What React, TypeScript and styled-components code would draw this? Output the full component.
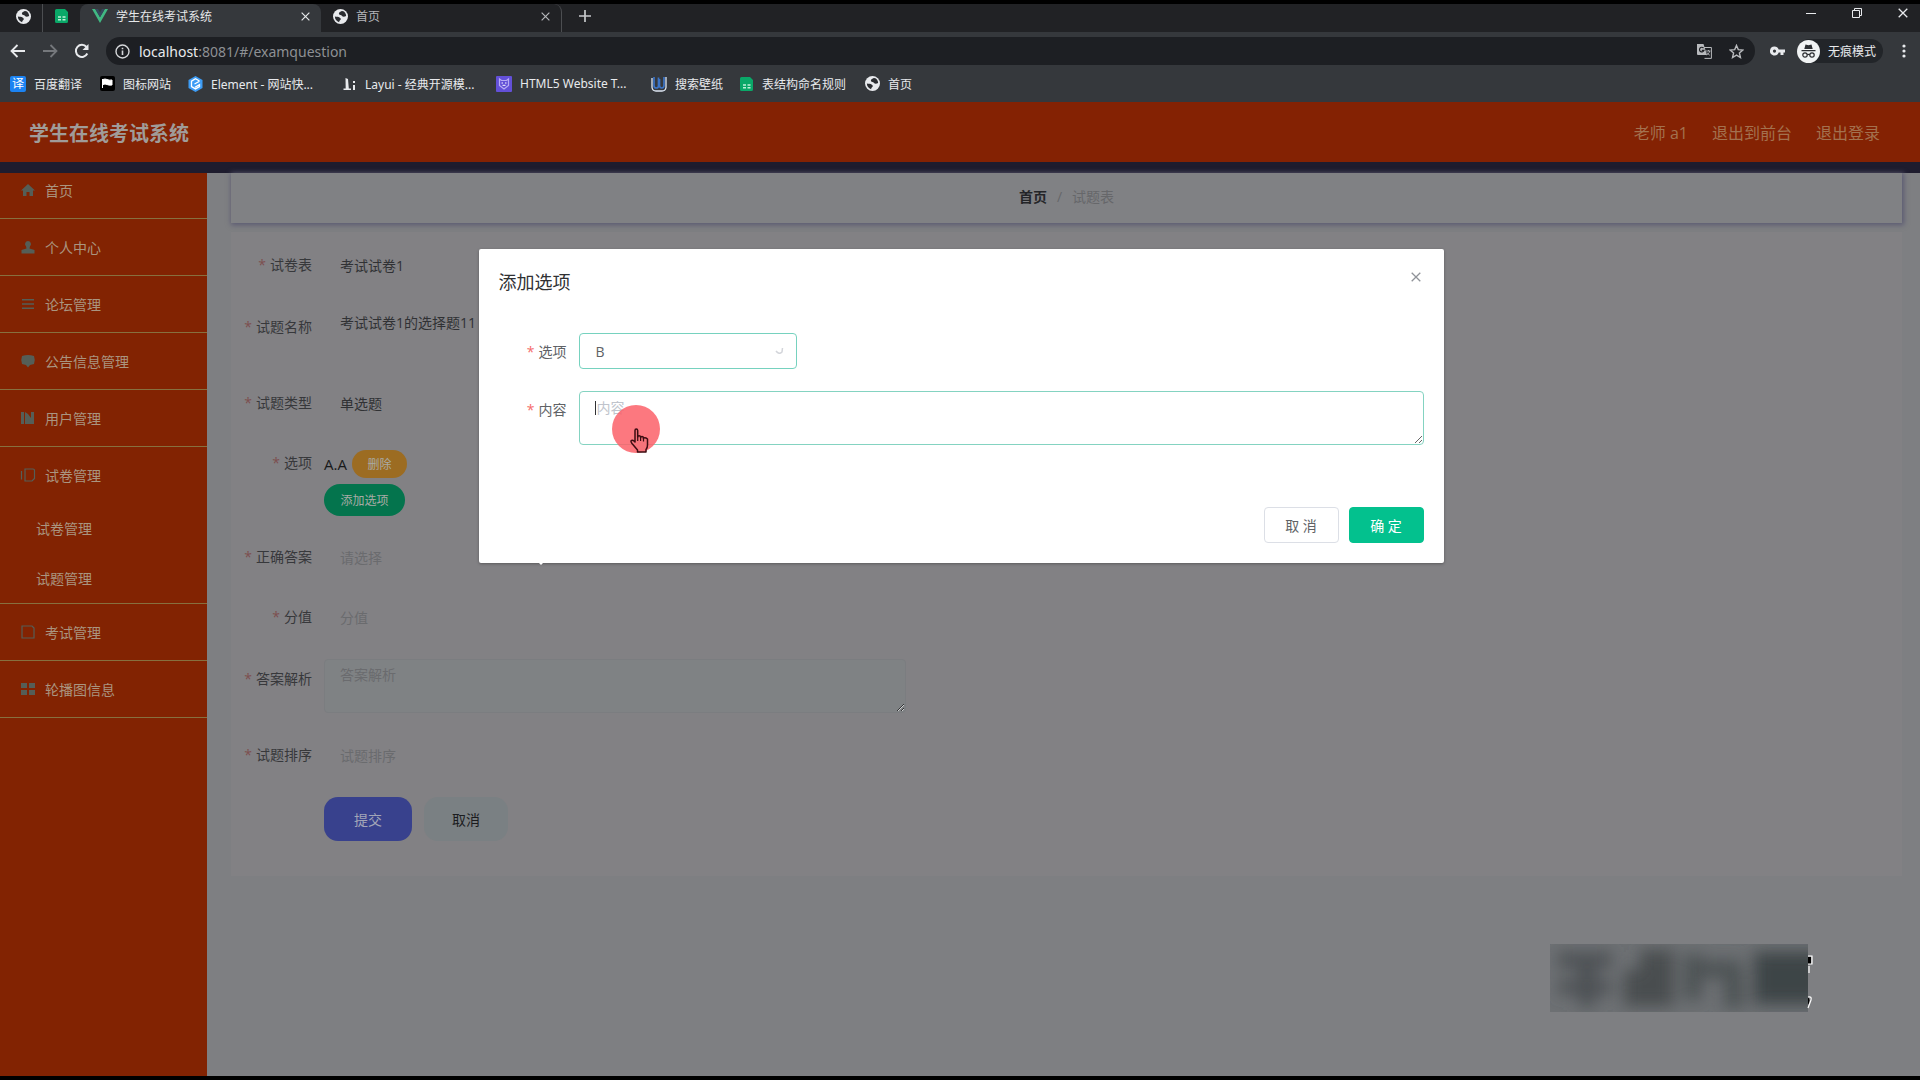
import React from "react";
import styled, { createGlobalStyle } from "styled-components";

const GlobalStyle = createGlobalStyle`
  * { box-sizing: border-box; }
  body { margin: 0; background: #000; overflow: hidden; }
  body, button, input, select, textarea {
    font-family: "Open Sans", "Noto Sans CJK SC", sans-serif;
  }
  button { cursor: pointer; padding: 0; }
  a { text-decoration: none; color: inherit; }
  ul, ol { list-style: none; margin: 0; padding: 0; }
  svg { display: block; flex: none; }
`;

const Screen = styled.div`
  height: 100vh;
  padding: 4px 0;
  display: flex;
  flex-direction: column;
  background: #000;
`;

/* ---------- browser ---------- */
const TabStrip = styled.div`
  height: 28px;
  flex: none;
  display: flex;
  align-items: stretch;
  background: #212225;
  color: #c6c8cb;
`;
const PinnedTab = styled.button<{ $divided?: boolean }>`
  width: ${(p) => (p.$divided ? 43 : 37)}px;
  padding: 0 0 4px ${(p) => (p.$divided ? 4 : 0)}px;
  border: 0;
  background: none;
  display: flex;
  align-items: center;
  justify-content: center;
  border-right: ${(p) => (p.$divided ? "1px solid #4c4e51" : "0")};
`;
const Tab = styled.div<{ $active?: boolean }>`
  width: 241px;
  padding: 0 11px 4px 12px;
  display: flex;
  align-items: center;
  gap: 8px;
  font-size: 12px;
  border-radius: 8px 8px 0 0;
  color: ${(p) => (p.$active ? "#e6e8ea" : "#b4b6ba")};
  background: ${(p) => (p.$active ? "#35383c" : "transparent")};
  border-right: ${(p) => (p.$active ? "0" : "1px solid #4c4e51")};
`;
const TabTitle = styled.span`
  flex: 1;
`;
const IconButton = styled.button`
  border: 0;
  background: none;
  color: inherit;
  display: flex;
  align-items: center;
  justify-content: center;
`;
const NewTab = styled(IconButton)`
  width: 46px;
  padding-bottom: 4px;
`;
const WindowControls = styled.div`
  margin-left: auto;
  padding: 0 12px 10px 0;
  display: flex;
  align-items: center;
  gap: 36px;
  color: #e8eaed;
`;
const Toolbar = styled.div`
  height: 38px;
  flex: none;
  padding: 0 11px 0 10px;
  display: flex;
  align-items: center;
  background: #35383c;
  color: #e8eaed;
`;
const NavButtons = styled.div`
  display: flex;
  gap: 16px;
  width: 96px;
`;
const AddressBar = styled.div`
  flex: 1;
  height: 28px;
  padding: 0 11px 0 9px;
  border-radius: 14px;
  background: #1d1f23;
  display: flex;
  align-items: center;
  gap: 9px;
  font-family: "Noto Sans", sans-serif;
  font-size: 14px;
  color: #8d9094;
`;
const Url = styled.a`
  flex: 1;
  b { font-weight: 400; color: #e8eaed; }
`;
const BarIcons = styled.div`
  display: flex;
  gap: 17px;
  color: #b8babd;
`;
const Profile = styled.div`
  height: 24px;
  margin-left: 12px;
  padding: 0 7px 0 0;
  border-radius: 12px;
  background: #222529;
  display: flex;
  align-items: center;
  gap: 8px;
  font-size: 12px;
`;
const KeyIcon = styled(IconButton)`
  margin-left: 15px;
`;
const MenuIcon = styled(IconButton)`
  margin-left: 16px;
  width: 10px;
`;
const Bookmarks = styled.nav`
  height: 32px;
  flex: none;
  padding: 0 10px 5px 10px;
  display: flex;
  align-items: center;
  gap: 17px;
  background: #35383c;
  color: #e8eaed;
  font-family: "Noto Sans", "Noto Sans CJK SC", sans-serif;
  font-size: 12px;
`;
const Bookmark = styled.a<{ $width: number }>`
  display: flex;
  align-items: center;
  gap: 8px;
  min-width: ${(p) => p.$width}px;
  white-space: nowrap;
`;

/* ---------- page ---------- */
const Page = styled.div`
  flex: 1;
  min-height: 0;
  position: relative;
  display: flex;
  flex-direction: column;
  background: #7e7f82;
`;
const Header = styled.header`
  height: 60px;
  flex: none;
  padding: 0 40px 0 29px;
  display: flex;
  align-items: center;
  justify-content: space-between;
  background: #842203;
`;
const Brand = styled.h1`
  margin: 0;
  font-size: 20px;
  font-weight: 700;
  color: #a09c99;
`;
const HeaderLinks = styled.div`
  display: flex;
  gap: 24px;
  font-size: 16px;
  color: #a3714f;
`;
const Divider = styled.div`
  height: 11px;
  flex: none;
  background: #1e1c2e;
`;
const Columns = styled.div`
  flex: 1;
  min-height: 0;
  display: flex;
`;
const Sidebar = styled.nav`
  width: 207px;
  flex: none;
  overflow: hidden;
  background: #822302;
`;
const Menu = styled.ul`
  margin-top: -11px;
`;
const MenuItem = styled.li`
  border-bottom: 1px solid #87703f;
`;
const MenuLink = styled.a`
  height: 56px;
  padding-left: 20px;
  display: flex;
  align-items: center;
  gap: 9px;
  font-size: 14px;
  color: #aa9580;
  svg { color: #555e57; }
`;
const SubLink = styled.a`
  height: 50px;
  padding-left: 36px;
  display: flex;
  align-items: center;
  font-size: 14px;
  color: #aa9580;
`;
const Main = styled.main`
  flex: 1;
  min-width: 0;
  padding: 0 18px 0 24px;
`;
const Breadcrumb = styled.ol`
  height: 50px;
  padding-bottom: 4px;
  display: flex;
  align-items: center;
  justify-content: center;
  gap: 10px;
  font-size: 14px;
  color: #66676a;
  background: #808184;
  box-shadow: 1px 1px 5px 1px #5b5a72;
  a { font-weight: 700; color: #242528; }
`;
const Card = styled.form`
  margin-top: 9px;
  padding: 13px 0 35px;
  background: #828184;
  display: flex;
  flex-direction: column;
`;
const Row = styled.div<{ $height: number }>`
  min-height: ${(p) => p.$height}px;
  display: flex;
`;
const Label = styled.label<{ $width: number; $bright?: boolean }>`
  width: ${(p) => p.$width}px;
  flex: none;
  padding-right: 12px;
  line-height: ${(p) => (p.$bright ? 38 : 40)}px;
  font-size: 14px;
  text-align: right;
  color: ${(p) => (p.$bright ? "#606266" : "#37383b")};
  &::before {
    content: "*";
    margin-right: 4px;
    color: ${(p) => (p.$bright ? "#f56c6c" : "#7d4f4f")};
  }
`;
const dimField = `
  border: 1px solid transparent;
  border-radius: 4px;
  background: transparent;
  color: #303134;
  font-size: 14px;
  outline: none;
  &::placeholder { color: #6a6b6e; opacity: 1; }
`;
const Input = styled.input`
  ${dimField}
  width: 600px;
  height: 40px;
  padding: 0 15px;
`;
const Select = styled.select`
  ${dimField}
  width: 217px;
  height: 40px;
  padding: 0 15px;
  appearance: none;
  &:invalid { color: #6a6b6e; }
`;
const TextArea = styled.textarea<{ $shaded?: boolean }>`
  ${dimField}
  width: 582px;
  height: 54px;
  padding: 4px 15px;
  line-height: 21px;
  resize: ${(p) => (p.$shaded ? "vertical" : "none")};
  background: ${(p) => (p.$shaded ? "#7f8284" : "transparent")};
  border-color: ${(p) => (p.$shaded ? "#7b7d80" : "transparent")};
`;
const Options = styled.div`
  display: flex;
  flex-direction: column;
  align-items: flex-start;
  gap: 6px;
  padding-top: 7px;
`;
const OptionLine = styled.div`
  display: flex;
  align-items: center;
  gap: 5px;
  height: 28px;
  font-size: 15px;
  color: #18191b;
`;
const Pill = styled.button<{ $color: string; $large?: boolean }>`
  width: ${(p) => (p.$large ? 81 : 55)}px;
  height: ${(p) => (p.$large ? 32 : 28)}px;
  border: 0;
  border-radius: 16px;
  background: ${(p) => p.$color};
  color: #a9aba6;
  font-size: 12px;
`;
const FormActions = styled.div`
  display: flex;
  gap: 12px;
  padding-left: 93px;
`;
const FormButton = styled.button<{ $primary?: boolean }>`
  width: ${(p) => (p.$primary ? 88 : 84)}px;
  height: 44px;
  border: 0;
  border-radius: 14px;
  font-size: 14px;
  background: ${(p) => (p.$primary ? "#38418d" : "#7a8083")};
  color: ${(p) => (p.$primary ? "#a3a6b8" : "#1b1c1e")};
`;

/* ---------- dialog ---------- */
const Overlay = styled.div`
  position: absolute;
  inset: 0;
  display: flex;
  justify-content: center;
  align-items: flex-start;
  padding: 147px 0 0 2px;
`;
const Dialog = styled.section`
  position: relative;
  width: 965px;
  max-width: 90%;
  border-radius: 2px;
  background: #fff;
  box-shadow: 0 1px 3px rgba(0, 0, 0, 0.3);
`;
const DialogHeader = styled.header`
  padding: 20px 20px 10px;
  display: flex;
  justify-content: space-between;
  align-items: flex-start;
`;
const DialogTitle = styled.h2`
  margin: 0;
  font-size: 18px;
  line-height: 26px;
  font-weight: 400;
  color: #303133;
`;
const CloseButton = styled(IconButton)`
  width: 16px;
  height: 16px;
  color: #909399;
`;
const DialogBody = styled.div`
  padding: 28px 20px 30px;
  display: flex;
  flex-direction: column;
`;
const SelectWrap = styled.div`
  position: relative;
  height: 36px;
  svg { position: absolute; right: 13px; top: 13px; color: #d3d5da; pointer-events: none; }
`;
const DialogSelect = styled.select`
  width: 218px;
  height: 36px;
  padding: 0 16px;
  border: 1px solid #76d2bf;
  border-radius: 4px;
  background: #fff;
  color: #606266;
  font-size: 14px;
  appearance: none;
  outline: none;
`;
const DialogTextArea = styled.textarea`
  flex: 1;
  height: 54px;
  padding: 5px 17px;
  border: 1px solid #84d3c1;
  border-radius: 4px;
  color: #606266;
  font-size: 14px;
  line-height: 21px;
  resize: vertical;
  outline: none;
  &::placeholder { color: #c0c4cc; opacity: 1; }
`;
const DialogFooter = styled.footer`
  padding: 0 20px 20px;
  display: flex;
  justify-content: flex-end;
  gap: 10px;
`;
const DialogButton = styled.button<{ $primary?: boolean }>`
  width: 75px;
  height: 36px;
  border-radius: 4px;
  font-size: 14px;
  border: 1px solid ${(p) => (p.$primary ? "#03c18e" : "#dcdfe6")};
  background: ${(p) => (p.$primary ? "#03c18e" : "#fff")};
  color: ${(p) => (p.$primary ? "#fff" : "#606266")};
`;
const Caret = styled.span`
  position: absolute;
  left: 116px;
  top: 152px;
  width: 1px;
  height: 14px;
  background: #303133;
`;
const Pointer = styled.div`
  position: absolute;
  left: 133px;
  top: 156px;
  width: 48px;
  height: 48px;
  border-radius: 50%;
  background: rgba(252, 96, 104, 0.85);
  svg { position: absolute; left: 17px; top: 23px; }
`;
const PopperTip = styled.span`
  position: absolute;
  left: 59px;
  bottom: -2px;
  border: 3px solid transparent;
  border-bottom-width: 0;
  border-top-color: #fff;
`;
const Stamp = styled.div`
  position: absolute;
  right: 102px;
  bottom: 64px;
  width: 268px;
  height: 68px;
`;

/* ---------- icons ---------- */
const Globe = () => (
  <svg width="15" height="15" viewBox="0 0 16 16">
    <circle cx="8" cy="8" r="8" fill="#e8eaed" />
    <path d="M10.500 2C8 2.200 5.800 3.800 6.500 5.500 7 6.700 8.800 6 9.500 7.200c.6 1.200 2.500 1.300 4.500.3C14 4.800 12.700 2.800 10.500 2z" fill="#2a2c30" />
    <path d="M2 8c1.700.3 4 0 5 1s1.700 1.300 1.200 2.300c-.5 1-1.500 1.200-1.700 2.700C3.800 13.300 2 11 2 8z" fill="#2a2c30" />
  </svg>
);
const Sheet = () => (
  <svg width="14" height="14" viewBox="0 0 14 14">
    <path d="M1.500 0H10l3 3v9.500a1.500 1.500 0 0 1-1.500 1.500h-10A1.500 1.500 0 0 1 0 12.500v-11A1.500 1.500 0 0 1 1.500 0z" fill="#0aa868" />
    <path d="M3 7.200h3v1.600H3zM7.500 7.200h3v1.600h-3zM3 9.900h3v1.600H3zM7.500 9.900h3v1.600h-3z" fill="#bff0d8" />
  </svg>
);
const VueLogo = () => (
  <svg width="16" height="14" viewBox="0 0 16 14">
    <path d="M0 0h3.200L8 8.300 12.800 0H16L8 14z" fill="#41b883" />
    <path d="M3.200 0H6l2 3.500L10 0h2.800L8 8.300z" fill="#35495e" />
  </svg>
);
const Cross = ({ size }: { size: number }) => (
  <svg width={size} height={size} viewBox="0 0 10 10" stroke="currentColor" strokeWidth="1.300">
    <path d="M.7.7l8.600 8.600M9.300.7L.7 9.300" />
  </svg>
);
const Plus = () => (
  <svg width="12" height="12" viewBox="0 0 12 12" stroke="currentColor" strokeWidth="1.700">
    <path d="M6 0v12M0 6h12" />
  </svg>
);
const Arrow = ({ forward }: { forward?: boolean }) => (
  <svg width="16" height="14" viewBox="0 0 16 14" fill="none" stroke={forward ? "#75787c" : "#e8eaed"} strokeWidth="1.800">
    {forward ? <path d="M1 7h13M8.500 1l6 6-6 6" /> : <path d="M15 7H2M7.500 1l-6 6 6 6" />}
  </svg>
);
const Reload = () => (
  <svg width="16" height="16" viewBox="0 0 16 16" fill="none" stroke="#e8eaed" strokeWidth="2">
    <path d="M13.300 10.500A6 6 0 1 1 12.500 4" />
    <path d="M14.500 1v6h-6z" fill="#e8eaed" stroke="none" />
  </svg>
);
const Info = () => (
  <svg width="15" height="15" viewBox="0 0 15 15" fill="none" stroke="#d5d7da" strokeWidth="1.400">
    <circle cx="7.500" cy="7.500" r="6.500" />
    <path d="M7.500 6.500v4.500M7.500 3.800v1.500" strokeWidth="1.600" />
  </svg>
);
const Translate = () => (
  <svg width="15" height="15" viewBox="0 0 15 15" fill="none">
    <path d="M6 3.500h8.400v10.900H7.500" stroke="#b8babd" />
    <path d="M0 0h6.500L10 11H1a1 1 0 0 1-1-1z" fill="#b8babd" />
    <path d="M6.500 4A2.300 2.300 0 1 0 7 6.300H4.800" stroke="#1d1f23" strokeWidth="1.200" />
    <path d="M9 7h4.500M11.500 6v1M12.700 7c-.3 1.800-1.500 3-3 4M10 8.500c.5 1 1.500 2 2.800 2.700" stroke="#b8babd" strokeWidth=".9" />
  </svg>
);
const Star = () => (
  <svg width="15" height="15" viewBox="0 0 16 16" fill="none" stroke="currentColor" strokeWidth="1.500">
    <path d="M8 1.500l1.900 4.500 4.900.4-3.700 3.200 1.100 4.800L8 11.900l-4.200 2.500 1.100-4.800L1.200 6.400 6.100 6z" />
  </svg>
);
const Key = () => (
  <svg width="15" height="10" viewBox="0 0 15 10">
    <path fillRule="evenodd" fill="#e8eaed" d="M4.500.5a4.500 4.500 0 0 1 4.200 3H15v3h-1.500v2.500h-3V6.500H8.700A4.500 4.500 0 1 1 4.500.5zm0 3a1.600 1.600 0 1 0 0 3.200 1.600 1.600 0 0 0 0-3.200z" />
  </svg>
);
const Incognito = () => (
  <svg width="23" height="23" viewBox="0 0 23 23">
    <circle cx="11.500" cy="11.500" r="11.500" fill="#f1f3f4" />
    <path d="M8.500 4.500l3 .7 3-.7 1.200 4.500H7.300zM4.500 10h14v1.200h-14z" fill="#2b2d31" />
    <g fill="none" stroke="#2b2d31" strokeWidth="1.200">
      <circle cx="8" cy="15" r="2.200" />
      <circle cx="15" cy="15" r="2.200" />
      <path d="M10.200 14.700q1.300-.8 2.600 0" />
    </g>
  </svg>
);
const Dots = () => (
  <svg width="4" height="14" viewBox="0 0 4 14" fill="#e8eaed">
    <circle cx="2" cy="2" r="1.600" /><circle cx="2" cy="7" r="1.600" /><circle cx="2" cy="12" r="1.600" />
  </svg>
);
const TranslateBadge = styled.span`
  width: 16px;
  height: 16px;
  border-radius: 2px;
  background: #1c83f2;
  color: #fff;
  font-size: 12px;
  line-height: 16px;
  text-align: center;
`;
const FlagIcon = () => (
  <svg width="15" height="15" viewBox="0 0 15 15">
    <rect width="15" height="15" rx="2" fill="#000" />
    <path d="M2.500 3v9M3 3.500q2-1 4 0t5 .5v5q-3 .5-5-.5t-4 0z" fill="#fff" stroke="#fff" />
  </svg>
);
const ElementIcon = () => (
  <svg width="15" height="16" viewBox="0 0 15 16">
    <path d="M7.500 0l7 4v8l-7 4-7-4V4z" fill="#3d9cf5" />
    <path d="M11.500 5L7.500 2.800 3.500 5.200v5.400l4 2.300 4-2.300V8.700L7 11.200M6.500 8l5-2.800" fill="none" stroke="#fff" strokeWidth="1.300" />
  </svg>
);
const LayuiIcon = () => (
  <svg width="14" height="14" viewBox="0 0 14 14" fill="#e8eaed">
    <path d="M2.500 1l2.500 1 .8 9.500H8V13H1.500v-1.500h1.200zM.5 11.500h7V13h-7zM10 4h2v2h-2zM10 8h2v5h-2z" />
  </svg>
);
const HtmlIcon = () => (
  <svg width="16" height="16" viewBox="0 0 16 16">
    <rect width="16" height="16" rx="1" fill="#6350d8" />
    <path d="M3.500 3l2 1.500h5l2-1.500v6.500L8 13 3.500 9.500z" fill="none" stroke="#b8acf5" strokeWidth="1.200" />
    <path d="M5.500 7h1.500M9 7h1.500M6.500 9.300h3" stroke="#fff" />
  </svg>
);
const WallpaperIcon = () => (
  <svg width="16" height="16" viewBox="0 0 16 16" fill="none">
    <path d="M1 2v9.500q.5 3.500 4 3.500h6q3.500 0 4-3.500V1" stroke="#dfe8f5" strokeWidth="1.300" />
    <path d="M3 1v8.500q0 2.500 2.300 2.500T7.500 9.500V1.500M8.500 3v6.500q.3 2.500 2.300 2.500T13 9.500V1" stroke="#3b73c5" strokeWidth="1.700" />
  </svg>
);
const menuIcons: Record<string, React.ReactNode> = {
  home: <path d="M8 2l7 6.500h-2V14h-3.500v-4h-3v4H3V8.500H1z" />,
  user: <path d="M8 2a3 3 0 0 1 2 5.200L9.500 9.500 14.500 11v3.500h-13V11l5-1.500L6 7.200A3 3 0 0 1 8 2z" />,
  list: <path d="M2 3h12v1.500H2zM2 7.200h12v1.500H2zM2 11.500h12V13H2z" />,
  message: <path d="M2 3q6-2 12 0 1.500 4 0 8l-4 1-2 2.500L6 12l-4-1Q.5 7 2 3z" />,
  chart: <path d="M1 2h3v12H1zM5 2l3 2 3 4V2h3v12H5z" />,
  copy: <path d="M5 2h8q1.500 0 1.500 1.500v8L12 14H5zM1.500 4v8.500" fill="none" stroke="currentColor" strokeWidth="1.200" />,
  file: <path d="M2 2h10l2 2v10H2z" fill="none" stroke="currentColor" strokeWidth="1.200" />,
  grid: <path d="M1 2h6v5H1zM9 2h6v5H9zM1 9h6v5H1zM9 9h6v5H9z" />,
};
const MenuIconSvg = ({ name }: { name: string }) => (
  <svg width="16" height="16" viewBox="0 0 16 16" fill="currentColor">{menuIcons[name]}</svg>
);
const Hand = () => (
  <svg width="20" height="25" viewBox="0 0 20 25">
    <path
      d="M6 14V2.500Q6 1 7.300 1T8.700 2.500V9q0-1.300 1.400-1.300T11.600 9v.8q0-1.200 1.400-1.200t1.400 1.300v.9q0-1 1.300-1T18.500 11v6q0 3-1.500 4.500V24H8.500v-2L3 15.500q-1.800-2.500-.5-3T5 13z"
      fill="#f4737a" stroke="#3c0d12" strokeWidth="1.500" strokeLinejoin="round"
    />
    <path d="M8.700 9v4M11.600 10v3M14.500 11v2.500" stroke="#3c0d12" strokeWidth="1.200" />
  </svg>
);

const bookmarks = [
  { label: "百度翻译", icon: <TranslateBadge>译</TranslateBadge>, width: 73 },
  { label: "图标网站", icon: <FlagIcon />, width: 71 },
  { label: "Element - 网站快...", icon: <ElementIcon />, width: 138 },
  { label: "Layui - 经典开源模...", icon: <LayuiIcon />, width: 136 },
  { label: "HTML5 Website T...", icon: <HtmlIcon />, width: 138 },
  { label: "搜索壁纸", icon: <WallpaperIcon />, width: 72 },
  { label: "表结构命名规则", icon: <Sheet />, width: 108 },
  { label: "首页", icon: <Globe />, width: 48 },
];

const menu: { label: string; icon: string; children?: string[] }[] = [
  { label: "首页", icon: "home" },
  { label: "个人中心", icon: "user" },
  { label: "论坛管理", icon: "list" },
  { label: "公告信息管理", icon: "message" },
  { label: "用户管理", icon: "chart" },
  { label: "试卷管理", icon: "copy", children: ["试卷管理", "试题管理"] },
  { label: "考试管理", icon: "file" },
  { label: "轮播图信息", icon: "grid" },
];

function BrowserChrome() {
  return (
    <>
      <TabStrip>
        <PinnedTab $divided aria-label="首页"><Globe /></PinnedTab>
        <PinnedTab aria-label="表格"><Sheet /></PinnedTab>
        <Tab $active>
          <VueLogo />
          <TabTitle>学生在线考试系统</TabTitle>
          <IconButton aria-label="关闭标签页"><Cross size={9} /></IconButton>
        </Tab>
        <Tab>
          <Globe />
          <TabTitle>首页</TabTitle>
          <IconButton aria-label="关闭标签页"><Cross size={9} /></IconButton>
        </Tab>
        <NewTab aria-label="新标签页"><Plus /></NewTab>
        <WindowControls>
          <IconButton aria-label="最小化">
            <svg width="10" height="10" viewBox="0 0 10 10" stroke="currentColor"><path d="M0 5.500h10" /></svg>
          </IconButton>
          <IconButton aria-label="还原">
            <svg width="10" height="10" viewBox="0 0 10 10" fill="none" stroke="currentColor"><path d="M.5 2.500h7v7h-7zM2.500 2V.5h7v7H8" /></svg>
          </IconButton>
          <IconButton aria-label="关闭"><Cross size={10} /></IconButton>
        </WindowControls>
      </TabStrip>
      <Toolbar>
        <NavButtons>
          <IconButton aria-label="后退"><Arrow /></IconButton>
          <IconButton aria-label="前进"><Arrow forward /></IconButton>
          <IconButton aria-label="刷新"><Reload /></IconButton>
        </NavButtons>
        <AddressBar>
          <Info />
          <Url href="#/examquestion"><b>localhost</b>:8081/#/examquestion</Url>
          <BarIcons><Translate /><Star /></BarIcons>
        </AddressBar>
        <KeyIcon aria-label="密码"><Key /></KeyIcon>
        <Profile><Incognito />无痕模式</Profile>
        <MenuIcon aria-label="菜单"><Dots /></MenuIcon>
      </Toolbar>
      <Bookmarks>
        {bookmarks.map((b) => (
          <Bookmark key={b.label} href="#" $width={b.width}>{b.icon}{b.label}</Bookmark>
        ))}
      </Bookmarks>
    </>
  );
}

function SideMenu() {
  return (
    <Sidebar>
      <Menu>
        {menu.map((m) => (
          <MenuItem key={m.label}>
            <MenuLink href="#"><MenuIconSvg name={m.icon} />{m.label}</MenuLink>
            {m.children?.map((c) => <SubLink key={c} href="#">{c}</SubLink>)}
          </MenuItem>
        ))}
      </Menu>
    </Sidebar>
  );
}

function QuestionForm() {
  return (
    <Card onSubmit={(e) => e.preventDefault()}>
      <Row $height={62}>
        <Label $width={93} htmlFor="paper">试卷表</Label>
        <Select id="paper"><option>考试试卷1</option></Select>
      </Row>
      <Row $height={76}>
        <Label $width={93} htmlFor="name">试题名称</Label>
        <TextArea id="name" defaultValue="考试试卷1的选择题11" />
      </Row>
      <Row $height={60}>
        <Label $width={93} htmlFor="type">试题类型</Label>
        <Select id="type"><option>单选题</option></Select>
      </Row>
      <Row $height={94}>
        <Label $width={93} htmlFor="add-option">选项</Label>
        <Options>
          <OptionLine>A.A <Pill type="button" $color="#9c6c22">删除</Pill></OptionLine>
          <Pill type="button" id="add-option" $large $color="#04744d">添加选项</Pill>
        </Options>
      </Row>
      <Row $height={60}>
        <Label $width={93} htmlFor="answer">正确答案</Label>
        <Select id="answer" required defaultValue=""><option value="">请选择</option></Select>
      </Row>
      <Row $height={62}>
        <Label $width={93} htmlFor="score">分值</Label>
        <Input id="score" placeholder="分值" />
      </Row>
      <Row $height={76}>
        <Label $width={93} htmlFor="analysis">答案解析</Label>
        <TextArea id="analysis" $shaded placeholder="答案解析" />
      </Row>
      <Row $height={62}>
        <Label $width={93} htmlFor="order">试题排序</Label>
        <Input id="order" placeholder="试题排序" />
      </Row>
      <FormActions>
        <FormButton $primary>提交</FormButton>
        <FormButton type="button">取消</FormButton>
      </FormActions>
    </Card>
  );
}

function OptionDialog() {
  return (
    <Overlay>
      <Dialog role="dialog" aria-labelledby="dialog-title">
        <DialogHeader>
          <DialogTitle id="dialog-title">添加选项</DialogTitle>
          <CloseButton aria-label="关闭"><Cross size={10} /></CloseButton>
        </DialogHeader>
        <DialogBody>
          <Row $height={58}>
            <Label $width={80} $bright htmlFor="option-key">选项</Label>
            <SelectWrap>
              <DialogSelect id="option-key" defaultValue="B"><option>B</option></DialogSelect>
              <svg width="10" height="10" viewBox="0 0 10 10" fill="none" stroke="currentColor" strokeWidth="1.500"><path d="M2 5q3 4 6 1l.5-4" /></svg>
            </SelectWrap>
          </Row>
          <Row $height={86}>
            <Label $width={80} $bright htmlFor="option-text">内容</Label>
            <DialogTextArea id="option-text" placeholder="内容" />
          </Row>
        </DialogBody>
        <DialogFooter>
          <DialogButton>取 消</DialogButton>
          <DialogButton $primary>确 定</DialogButton>
        </DialogFooter>
        <Caret />
        <Pointer><Hand /></Pointer>
        <PopperTip />
      </Dialog>
    </Overlay>
  );
}

function BlurredStamp() {
  return (
    <Stamp aria-hidden="true">
      <svg width="268" height="68" viewBox="0 0 268 68">
        <defs>
          <filter id="soft" x="-30%" y="-40%" width="160%" height="180%"><feGaussianBlur stdDeviation="8" /></filter>
          <clipPath id="frame"><rect width="258" height="68" /></clipPath>
        </defs>
        <rect width="258" height="68" fill="#6d7073" />
        <g clipPath="url(#frame)">
          <g filter="url(#soft)">
            <path d="M8 8h54v16H8zM8 36h54v14H8zM28 8h18v54H28z" fill="#4e5154" />
            <path d="M74 26h50v36H74zM90 6h34v30H90z" fill="#484d50" />
            <path d="M134 10h18v46h-18zM148 16h44v18h-44zM174 30h20v34h-20z" fill="#4e5255" />
            <path d="M204 8h70v52h-70z" fill="#3e4447" />
          </g>
        </g>
        <path d="M258 13h3v7h-3zM258 53q3 3 0 8z" fill="#000" />
        <path d="M258 12h4v8h-4M259 22v7M258 53q4-1 3 3l-3 8" fill="none" stroke="#fff" strokeWidth="1.200" />
      </svg>
    </Stamp>
  );
}

export default function App() {
  return (
    <Screen>
      <GlobalStyle />
      <BrowserChrome />
      <Page>
        <Header>
          <Brand>学生在线考试系统</Brand>
          <HeaderLinks>
            <span>老师 a1</span>
            <a href="#">退出到前台</a>
            <a href="#">退出登录</a>
          </HeaderLinks>
        </Header>
        <Divider />
        <Columns>
          <SideMenu />
          <Main>
            <Breadcrumb>
              <li><a href="#">首页</a></li>
              <li>/</li>
              <li>试题表</li>
            </Breadcrumb>
            <QuestionForm />
          </Main>
        </Columns>
        <BlurredStamp />
        <OptionDialog />
      </Page>
    </Screen>
  );
}
